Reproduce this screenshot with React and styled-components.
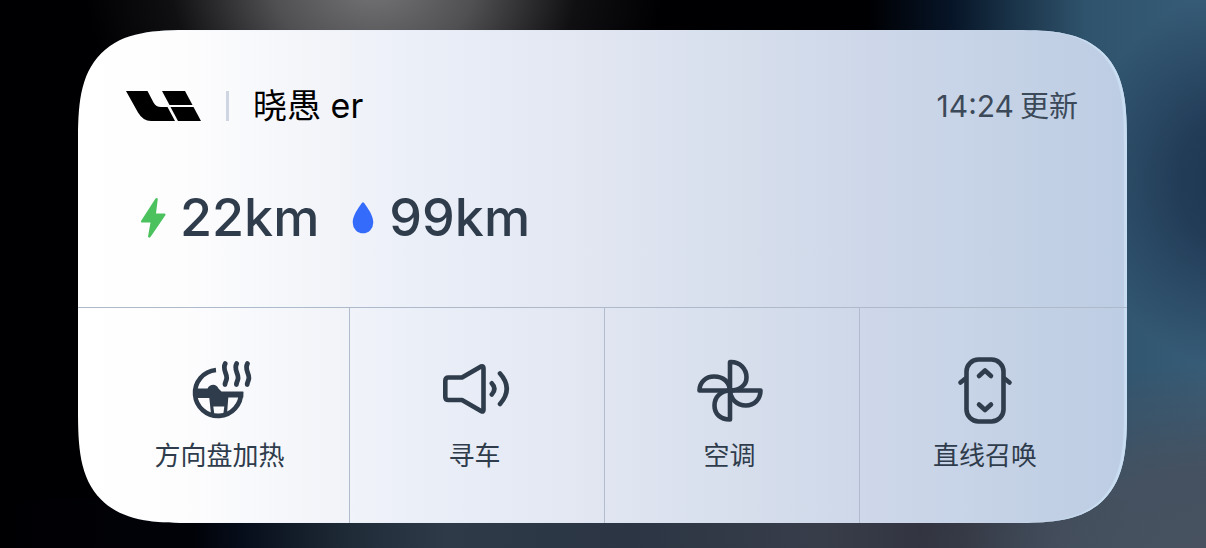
import React from "react";
import styled, { createGlobalStyle } from "styled-components";

// ============================
// Styled Components
// ============================

const GlobalStyle = createGlobalStyle`
  * {
    box-sizing: border-box;
  }

  body {
    margin: 0;
    background: #000003;
    font-family: Inter, "Noto Sans CJK SC", sans-serif;
  }
`;

// Blurred wallpaper behind the widget
const Wallpaper = styled.main`
  min-height: 100vh;
  padding: 30px 79px 25px 78px;
  display: flex;
  flex-direction: column;
  background:
    radial-gradient(ellipse 24% 40% at 31% -3%, #757578 0%, rgba(100, 100, 103, 0.8) 35%, rgba(40, 40, 43, 0.4) 70%, rgba(0, 0, 3, 0) 100%),
    radial-gradient(ellipse 12% 34% at 102% 33%, #1d3450 0%, rgba(29, 52, 80, 0.8) 35%, rgba(29, 52, 80, 0) 100%),
    radial-gradient(ellipse 24% 36% at 100% 102%, #485260 0%, rgba(70, 80, 94, 0.9) 45%, rgba(60, 75, 95, 0) 100%),
    linear-gradient(
      to right,
      #000003 0%,
      #010208 16%,
      #060d1a 20%,
      #202b38 29%,
      #2e3a48 37%,
      #2b3543 52%,
      #383d4a 68%,
      #30323d 80%,
      rgba(56, 64, 78, 0.9) 88%,
      rgba(60, 72, 88, 0) 95%
    ) bottom / 100% 50px no-repeat,
    linear-gradient(to right, #000003 0%, #000003 72%, #071528 79%, #1a3348 84%, #2f536c 90%, #375c77 100%);
`;

const Card = styled.section`
  flex: 1;
  display: flex;
  flex-direction: column;
  overflow: hidden;
  color: #2f3c4c;
  background: linear-gradient(
    to right,
    #ffffff 0%,
    #fdfdfe 10%,
    #f2f4f9 24%,
    #ebeff8 32%,
    #e2e7f2 48%,
    #d6deec 64%,
    #cdd7e9 76%,
    #bdcde3 100%
  );
  box-shadow: inset -3px 0 1px #c9def2;
  border-radius: 80px;

  @supports (corner-shape: squircle) {
    border-radius: 114px;
    corner-shape: superellipse(1.6);
  }
`;

const Summary = styled.div`
  flex: 1;
  padding: 54px 49px 0 48px;
`;

const Header = styled.header`
  height: 44px;
  display: flex;
  align-items: center;
  justify-content: space-between;
`;

const Owner = styled.div`
  display: flex;
  align-items: center;
  gap: 24px;
`;

const Divider = styled.span`
  width: 3px;
  height: 30px;
  background: #cfd6e2;
`;

const OwnerName = styled.h1`
  margin: 0;
  font-size: 34px;
  line-height: 44px;
  font-weight: 400;
  color: #000;
`;

const Updated = styled.div`
  display: flex;
  align-items: baseline;
  gap: 6px;
  font-size: 29px;
  line-height: 48px;
  color: #3c4959;
`;

const Clock = styled.time`
  font-size: 30px;
`;

const Ranges = styled.div`
  display: flex;
  gap: 32px;
  margin-top: 56px;
  padding-left: 14px;
`;

const Range = styled.div`
  display: flex;
  align-items: center;
  gap: 14px;
  font-size: 52px;
  line-height: 68px;
  font-weight: 500;
`;

const Actions = styled.nav`
  display: grid;
  grid-template-columns: repeat(4, 1fr);
  padding: 0 12px 0 17px;
  border-top: 1px solid #aeb9c9;
`;

const Action = styled.button`
  height: 215px;
  padding: 46px 5px 0 0;
  display: flex;
  flex-direction: column;
  align-items: center;
  gap: 12px;
  border: none;
  border-right: 1px solid #b1bccd;
  background: none;
  color: inherit;
  font-family: inherit;
  font-size: 26px;
  line-height: 36px;
  cursor: pointer;

  &:last-child {
    border-right: none;
  }
`;

const Icon = styled.svg`
  display: block;
  flex: none;
  fill: none;
  stroke: currentColor;
  stroke-width: 4.6;
  stroke-linecap: round;
  stroke-linejoin: round;
`;

// ============================
// Icons
// ============================

const BrandLogo = () => (
  <svg width="76" height="30" viewBox="0 0 76 30" role="img" aria-label="Li">
    <path d="M0 0H21.500L27.500 11.500Q30 16 35 16H41.500L49 30H25Q17 30 12 21.500Z" />
    <path d="M36 0H59L66.500 14H43.500Z" />
    <path d="M44.500 16H67.500L75 30H52Z" />
  </svg>
);

const BoltIcon = () => (
  <svg width="26" height="42" viewBox="0 0 26 42" aria-hidden="true">
    <path
      d="M15.500 1.500L1 24Q.5 25.500 2 25.500H10.500L8 39.500Q8.500 41.500 10.500 40L25.500 18Q26 16.500 24.500 16.500H16L17.800 2Q17.300 .3 15.500 1.500Z"
      fill="#4cc25f"
    />
  </svg>
);

const DropIcon = () => (
  <svg width="24" height="34" viewBox="0 0 24 34" aria-hidden="true">
    <path
      d="M11 1.800Q12 .6 13 1.800C17 7.500 22.300 14.500 22.300 21.500A10.300 10.800 0 0 1 1.700 21.500C1.700 14.500 7 7.500 11 1.800Z"
      fill="#356bfb"
    />
  </svg>
);

const HeatedWheelIcon = () => (
  <Icon width="72" height="72" viewBox="0 0 72 72" aria-hidden="true">
    <path d="M32 16A23 23 0 1 0 57 38" strokeLinecap="butt" />
    <path
      d="M10 34.500H23.500Q25.500 30.800 29.300 30.800Q32.500 30.800 34.500 34.500L37.500 37.500H59.300V43.500H44.300L43 60H39.300L40.300 52.500H29.300L30.300 60H27L25.300 44H10Z"
      fill="currentColor"
      stroke="none"
    />
    <path
      d="M41.300 9.500C38 15.500 43 19 42.700 24C42.500 27 41 28 41 30.500M52.700 9.500C49.400 15.500 54.400 19 54.100 24C53.900 27 52.400 28 52.400 30.500M63.500 9.500C60.200 15.500 65.200 19 64.900 24C64.700 27 63.200 28 63.200 30.500"
      strokeWidth="4.8"
    />
  </Icon>
);

const HornIcon = () => (
  <Icon width="72" height="72" viewBox="0 0 72 72" aria-hidden="true">
    <path d="M9.500 23.500H23L42 12.500Q44.500 11.500 44.500 14V56Q44.500 58.500 42 57L23 46H9.500Q6.300 46 6.300 43V27Q6.300 23.500 9.500 23.500Z" />
    <path d="M52.800 29.300Q58 34.700 52.800 40.500M61 19.500Q74.500 34.500 61 50" />
  </Icon>
);

const FanIcon = () => (
  <Icon width="72" height="72" viewBox="0 0 72 72" aria-hidden="true">
    <path d="M36 36.500V8C46 7.500 52.500 15 52.500 23.500C52.500 31 46 36.300 36 36.500Z" />
    <path d="M36 36.500H66.500C66.500 45.500 60 51.500 52 51.500C42.500 51.500 36.500 45 36 36.500Z" />
    <path d="M36 36.500V65.500C26 65.500 20.500 59.500 20.500 51.500C20.500 42.500 27 37 36 36.500Z" />
    <path d="M36 36.500H5.500C5.500 28 12 22.500 20 22.500C30 22.500 35.500 28.500 36 36.500Z" />
  </Icon>
);

const SummonIcon = () => (
  <Icon width="72" height="72" viewBox="0 0 72 72" aria-hidden="true">
    <rect x="17.500" y="5.500" width="37" height="62" rx="12" />
    <path d="M30 22L36 16.500L42 22M30 50.500L36 56L42 50.500M16.500 24.500L11.500 28.500M55.500 24.500L60.500 28.500" />
  </Icon>
);

// ============================
// Data
// ============================

const ranges = [
  { value: "22km", icon: BoltIcon },
  { value: "99km", icon: DropIcon },
];

const actions = [
  { label: "方向盘加热", icon: HeatedWheelIcon },
  { label: "寻车", icon: HornIcon },
  { label: "空调", icon: FanIcon },
  { label: "直线召唤", icon: SummonIcon },
];

// ============================
// Component
// ============================

export default function App() {
  return (
    <Wallpaper lang="zh-CN">
      <GlobalStyle />
      <Card>
        <Summary>
          <Header>
            <Owner>
              <BrandLogo />
              <Divider />
              <OwnerName>晓愚 er</OwnerName>
            </Owner>
            <Updated>
              <Clock>14:24</Clock>
              更新
            </Updated>
          </Header>

          <Ranges>
            {ranges.map(({ value, icon: RangeIcon }) => (
              <Range key={value}>
                <RangeIcon />
                {value}
              </Range>
            ))}
          </Ranges>
        </Summary>

        <Actions>
          {actions.map(({ label, icon: ActionIcon }) => (
            <Action key={label} type="button">
              <ActionIcon />
              {label}
            </Action>
          ))}
        </Actions>
      </Card>
    </Wallpaper>
  );
}
